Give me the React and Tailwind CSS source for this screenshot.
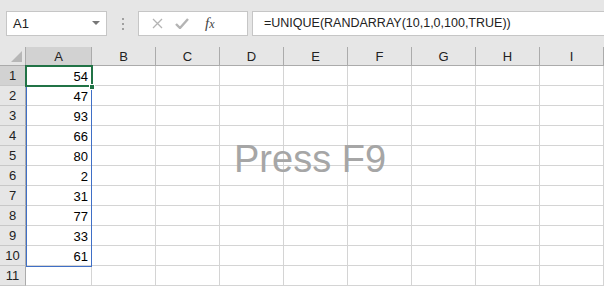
const cols = ['A', 'B', 'C', 'D', 'E', 'F', 'G', 'H', 'I'];
const values = [54, 47, 93, 66, 80, 2, 31, 77, 33, 61, null];

const font = { fontFamily: '"Liberation Sans", Arial, sans-serif' };

const App = () => {
  return (
    <div className="w-[604px] h-[287px] overflow-hidden bg-white text-[#222]" style={font}>
      {/* Formula bar */}
      <div className="h-[47px] bg-[#e6e6e6] flex items-start pt-[11px] pl-[6px]">
        <div className="w-[101px] h-[25px] bg-white border border-[#c6c6c6] flex items-center justify-between pl-[6px] pr-[6px]">
          <span className="text-[13px]">A1</span>
          <svg width="8" height="5" viewBox="0 0 8 5">
            <path d="M0 0 L8 0 L4 4 Z" fill="#777" />
          </svg>
        </div>
        <div className="w-[31px] h-[25px] flex flex-col items-center justify-center gap-[3px]">
          <span className="w-[2px] h-[2px] bg-[#a0a0a0]" />
          <span className="w-[2px] h-[2px] bg-[#a0a0a0]" />
          <span className="w-[2px] h-[2px] bg-[#a0a0a0]" />
        </div>
        <div className="w-[110px] h-[25px] bg-white border border-[#c6c6c6] flex items-center">
          <svg className="ml-[13px]" width="11" height="11" viewBox="0 0 11 11">
            <path d="M1 1 L10 10 M10 1 L1 10" stroke="#b4b4b4" strokeWidth="1.3" fill="none" />
          </svg>
          <svg className="ml-[12px]" width="14" height="11" viewBox="0 0 14 11">
            <path d="M1 6 L5 10 L13 1" stroke="#b4b4b4" strokeWidth="2.4" fill="none" />
          </svg>
          <span
            className="ml-[16px] text-[15px] italic text-[#444]"
            style={{ fontFamily: '"Liberation Serif", "Times New Roman", serif' }}
          >
            f<span className="text-[12px]">x</span>
          </span>
        </div>
        <div className="ml-[4px] flex-1 h-[25px] bg-white border border-[#c6c6c6] border-r-0 flex items-center pl-[11px]">
          <span className="text-[12.5px]">=UNIQUE(RANDARRAY(10,1,0,100,TRUE))</span>
        </div>
      </div>

      {/* Sheet */}
      <div className="relative">
        <div className="grid grid-cols-[26px_66px_repeat(8,64px)] grid-rows-[19px_repeat(11,20px)]">
          {/* Corner */}
          <div className="bg-[#e6e6e6] border-r border-b border-[#ababab] relative">
            <svg className="absolute right-[3px] bottom-[3px]" width="11" height="11" viewBox="0 0 11 11">
              <path d="M11 0 L11 11 L0 11 Z" fill="#b7b7b7" />
            </svg>
          </div>
          {cols.map((c, i) => (
            <div
              key={c}
              className={`${i === 0 ? 'bg-[#d2d2d2]' : 'bg-[#e6e6e6]'} border-r border-b border-[#ababab] flex items-center justify-center text-[13px] leading-none`}
            >
              {c}
            </div>
          ))}

          {values.map((v, r) => (
            <div key={r} className="contents">
              <div
                className={`${r === 0 ? 'bg-[#d2d2d2]' : 'bg-[#e6e6e6]'} border-r border-b border-[#ababab] border-b-[#c8c8c8] flex items-center justify-center text-[13px] leading-none`}
              >
                {r + 1}
              </div>
              {cols.map((c) => (
                <div
                  key={c}
                  className="border-r border-b border-[#d4d4d4] text-[13px] leading-[20px] text-right pr-[3px] pt-[1px] text-black"
                >
                  {c === 'A' && v !== null ? v : ''}
                </div>
              ))}
            </div>
          ))}
        </div>

        {/* Spill range border */}
        <div className="absolute left-[26px] top-[19px] w-[66px] h-[201px] border border-[#3f6fc6] pointer-events-none" />

        {/* Active cell */}
        <div className="absolute left-[25px] top-[18px] w-[68px] h-[22px] border-2 border-[#217346] pointer-events-none" />
        <div className="absolute left-[89px] top-[37px] w-[6px] h-[6px] bg-[#217346] border border-white" />

        {/* Overlay caption */}
        <div className="absolute left-[234px] top-[93px] text-[38px] leading-none text-[#a6a6a6] pointer-events-none">
          Press F9
        </div>
      </div>
    </div>
  );
};

export default App;
